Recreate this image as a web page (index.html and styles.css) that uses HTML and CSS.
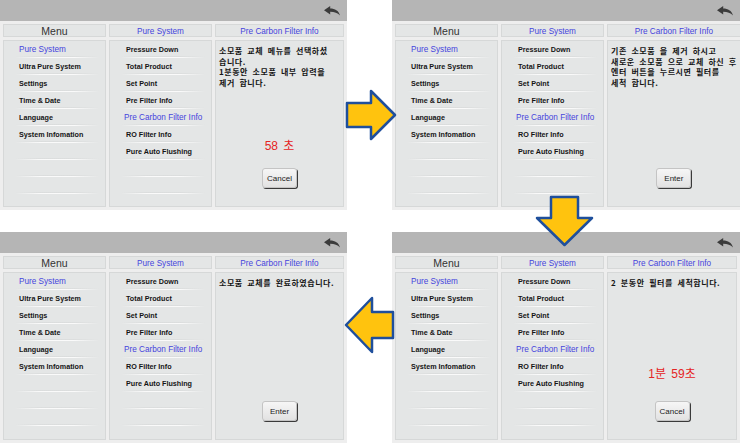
FILE: index.html
```html
<!DOCTYPE html>
<html lang="ko">
<head>
    <meta charset="UTF-8">
    <title>Pre Carbon Filter Info</title>
    <link rel="stylesheet" href="styles.css">
</head>
<body>
    <div class="board">

        <!-- step 1 -->
        <div class="screen">
            <div class="topbar">
                <svg class="back" viewBox="0 0 16 10"><path d="M0 4.2 L6.2 0 V2.6 C11 2.6 14.6 4.6 16 9.6 C13.6 6.9 10.6 5.8 6.2 5.8 V8.4 Z"/></svg>
            </div>
            <div class="cols">
                <div class="cell head menu">Menu</div>
                <div class="cell head">Pure System</div>
                <div class="cell head">Pre Carbon Filter Info</div>
                <ul class="cell list main">
                    <li class="on">Pure System</li>
                    <li>Ultra Pure System</li>
                    <li>Settings</li>
                    <li>Time &amp; Date</li>
                    <li>Language</li>
                    <li>System Infomation</li>
                    <li></li><li></li><li></li>
                </ul>
                <ul class="cell list sub">
                    <li>Pressure Down</li>
                    <li>Total Product</li>
                    <li>Set Point</li>
                    <li>Pre Filter Info</li>
                    <li class="on">Pre Carbon Filter Info</li>
                    <li>RO Filter Info</li>
                    <li>Pure Auto Flushing</li>
                    <li></li><li></li>
                </ul>
                <div class="cell info">
                    <p class="msg">소모품 교체 메뉴를 선택하셨<br>습니다.<br>1분동안 소모품 내부 압력을<br>제거 합니다.</p>
                    <div class="count">58 초</div>
                    <button class="btn">Cancel</button>
                </div>
            </div>
        </div>

        <!-- step 2 -->
        <div class="screen">
            <div class="topbar">
                <svg class="back" viewBox="0 0 16 10"><path d="M0 4.2 L6.2 0 V2.6 C11 2.6 14.6 4.6 16 9.6 C13.6 6.9 10.6 5.8 6.2 5.8 V8.4 Z"/></svg>
            </div>
            <div class="cols">
                <div class="cell head menu">Menu</div>
                <div class="cell head">Pure System</div>
                <div class="cell head">Pre Carbon Filter Info</div>
                <ul class="cell list main">
                    <li class="on">Pure System</li>
                    <li>Ultra Pure System</li>
                    <li>Settings</li>
                    <li>Time &amp; Date</li>
                    <li>Language</li>
                    <li>System Infomation</li>
                    <li></li><li></li><li></li>
                </ul>
                <ul class="cell list sub">
                    <li>Pressure Down</li>
                    <li>Total Product</li>
                    <li>Set Point</li>
                    <li>Pre Filter Info</li>
                    <li class="on">Pre Carbon Filter Info</li>
                    <li>RO Filter Info</li>
                    <li>Pure Auto Flushing</li>
                    <li></li><li></li>
                </ul>
                <div class="cell info">
                    <p class="msg">기존 소모품 을 제거 하시고<br>새로운 소모품 으로 교체 하신 후<br>엔터 버튼을 누르시면 필터를<br>세척 합니다.</p>
                    <button class="btn">Enter</button>
                </div>
            </div>
        </div>

        <!-- step 4 -->
        <div class="screen">
            <div class="topbar">
                <svg class="back" viewBox="0 0 16 10"><path d="M0 4.2 L6.2 0 V2.6 C11 2.6 14.6 4.6 16 9.6 C13.6 6.9 10.6 5.8 6.2 5.8 V8.4 Z"/></svg>
            </div>
            <div class="cols">
                <div class="cell head menu">Menu</div>
                <div class="cell head">Pure System</div>
                <div class="cell head">Pre Carbon Filter Info</div>
                <ul class="cell list main">
                    <li class="on">Pure System</li>
                    <li>Ultra Pure System</li>
                    <li>Settings</li>
                    <li>Time &amp; Date</li>
                    <li>Language</li>
                    <li>System Infomation</li>
                    <li></li><li></li><li></li>
                </ul>
                <ul class="cell list sub">
                    <li>Pressure Down</li>
                    <li>Total Product</li>
                    <li>Set Point</li>
                    <li>Pre Filter Info</li>
                    <li class="on">Pre Carbon Filter Info</li>
                    <li>RO Filter Info</li>
                    <li>Pure Auto Flushing</li>
                    <li></li><li></li>
                </ul>
                <div class="cell info">
                    <p class="msg">소모품 교체를 완료하였습니다.</p>
                    <button class="btn">Enter</button>
                </div>
            </div>
        </div>

        <!-- step 3 -->
        <div class="screen">
            <div class="topbar">
                <svg class="back" viewBox="0 0 16 10"><path d="M0 4.2 L6.2 0 V2.6 C11 2.6 14.6 4.6 16 9.6 C13.6 6.9 10.6 5.8 6.2 5.8 V8.4 Z"/></svg>
            </div>
            <div class="cols">
                <div class="cell head menu">Menu</div>
                <div class="cell head">Pure System</div>
                <div class="cell head">Pre Carbon Filter Info</div>
                <ul class="cell list main">
                    <li class="on">Pure System</li>
                    <li>Ultra Pure System</li>
                    <li>Settings</li>
                    <li>Time &amp; Date</li>
                    <li>Language</li>
                    <li>System Infomation</li>
                    <li></li><li></li><li></li>
                </ul>
                <ul class="cell list sub">
                    <li>Pressure Down</li>
                    <li>Total Product</li>
                    <li>Set Point</li>
                    <li>Pre Filter Info</li>
                    <li class="on">Pre Carbon Filter Info</li>
                    <li>RO Filter Info</li>
                    <li>Pure Auto Flushing</li>
                    <li></li><li></li>
                </ul>
                <div class="cell info">
                    <p class="msg">2 분동안 필터를 세척합니다.</p>
                    <div class="count count-long">1분 59초</div>
                    <button class="btn">Cancel</button>
                </div>
            </div>
        </div>

        <!-- step arrows -->
        <svg class="arrow arrow-right" viewBox="0 0 54 52"><polygon points="3,14 27,14 27,2 51,26 27,50 27,38 3,38"/></svg>
        <svg class="arrow arrow-down" viewBox="0 0 60 53"><polygon points="16,2 43,2 43,23 57,23 29.5,50 2,23 16,23"/></svg>
        <svg class="arrow arrow-left" viewBox="0 0 52 60"><polygon points="2,30 28,3 28,17 49,17 49,43 28,43 28,57"/></svg>
    </div>
</body>
</html>
```

FILE: styles.css
```css
* {
    box-sizing: border-box;
    margin: 0;
    padding: 0;
}

body {
    width: 740px;
    height: 446px;
    overflow: hidden;
    background-color: #fff;
    font-family: "Liberation Sans", "Noto Sans CJK KR", sans-serif;
}

.board {
    position: relative;
    display: grid;
    grid-template-columns: 347px 348px;
    grid-template-rows: 210px 211px;
    column-gap: 45px;
    row-gap: 22px;
}

.screen {
    display: flex;
    flex-direction: column;
    background-color: #eeeeee;
    overflow: hidden;
}

.topbar {
    height: 21px;
    flex-shrink: 0;
    background-color: #b5b5b5;
    display: flex;
    justify-content: flex-end;
    align-items: center;
    padding-right: 7px;
}

.back {
    width: 16px;
    height: 10px;
    fill: #3b3b3b;
}

.cols {
    flex: 1;
    display: grid;
    grid-template-columns: 103px 103px 1fr;
    grid-template-rows: 13px 1fr;
    gap: 3px;
    padding: 3px;
}

.cell {
    background-color: #e4e6e6;
    border: 1px solid #d6d8d8;
}

.head {
    display: flex;
    align-items: center;
    justify-content: center;
    padding-top: 1px;
    font-size: 8.2px;
    color: #4444dd;
    white-space: nowrap;
}

.head.menu {
    padding-top: 0;
    font-size: 10.5px;
    color: #333;
}

.list {
    list-style: none;
}

.list li {
    height: 17px;
    display: flex;
    align-items: center;
    margin: 0 6px 0 11px;
    padding-left: 4px;
    font-size: 7.2px;
    font-weight: bold;
    color: #151515;
    white-space: nowrap;
    background:
        linear-gradient(to right, rgba(214, 216, 216, 0), rgba(214, 216, 216, 0.6) 30%, rgba(214, 216, 216, 0.6) 70%, rgba(214, 216, 216, 0)) left bottom 1px / 100% 1px no-repeat,
        linear-gradient(to right, rgba(250, 250, 250, 0), #fafafa 30%, #fafafa 70%, rgba(250, 250, 250, 0)) left bottom / 100% 1px no-repeat;
}

.list li.on {
    font-size: 8.2px;
    font-weight: normal;
    color: #4444dd;
}

.sub li {
    padding-left: 5px;
}

.sub li.on {
    padding-left: 3px;
}

.info {
    display: flex;
    flex-direction: column;
    padding: 5px 3px 0;
}

.msg {
    font-family: "Noto Sans CJK KR", sans-serif;
    font-size: 8px;
    font-weight: bold;
    line-height: 10.7px;
    letter-spacing: 0.55px;
    word-spacing: 1.8px;
    color: #151515;
    white-space: nowrap;
}

.count {
    margin-top: auto;
    margin-bottom: 15px;
    text-align: center;
    font-size: 12px;
    line-height: 14px;
    word-spacing: 2px;
    color: #e42424;
}

.count-long {
    margin-bottom: 20px;
}

.btn {
    align-self: center;
    width: 35px;
    height: 20px;
    margin-top: auto;
    margin-bottom: 18px;
    font-family: "Liberation Sans", sans-serif;
    font-size: 8px;
    color: #222;
    background: linear-gradient(#f6f6f6, #e2e2e2);
    border: 1px solid #c4c4c4;
    border-radius: 3px;
    box-shadow: 1px 1px 0 #3a3a3a;
}

.count + .btn {
    margin-top: 0;
}

.arrow {
    position: absolute;
    fill: #ffc30e;
    stroke: #1f4f9c;
    stroke-width: 2.5;
    stroke-linejoin: round;
}

.arrow-right {
    left: 344px;
    top: 89px;
    width: 54px;
    height: 52px;
}

.arrow-down {
    left: 535px;
    top: 195px;
    width: 60px;
    height: 53px;
}

.arrow-left {
    left: 344px;
    top: 295px;
    width: 52px;
    height: 60px;
}
```
